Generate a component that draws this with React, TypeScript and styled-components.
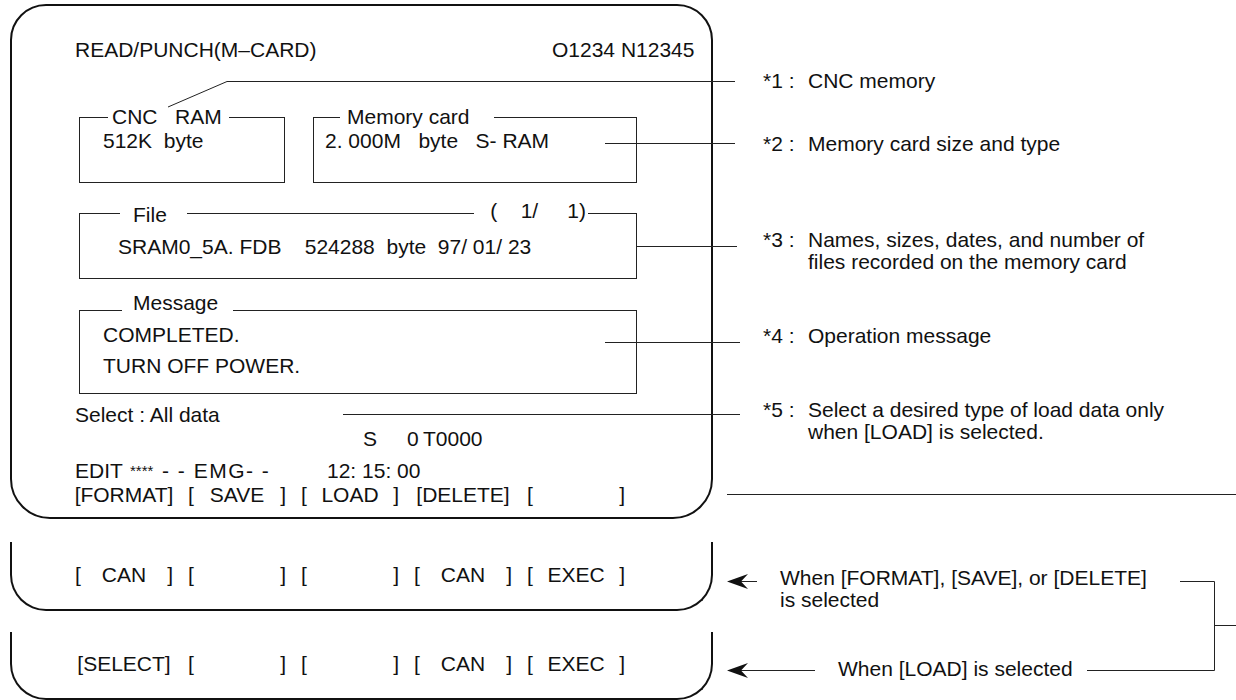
import React from "react";
import styled, { createGlobalStyle } from "styled-components";

const Global = createGlobalStyle`
  html, body { margin: 0; padding: 0; background: #fff; }
  body { font-family: "Liberation Sans", Arial, Helvetica, sans-serif; color: #111; }
`;

const Page = styled.div`
  position: relative;
  width: 1236px;
  height: 700px;
  overflow: hidden;
  display: grid;
  grid-template-columns: 713px 1fr;
  grid-template-rows: 519px 92px 89px;
  font-size: 21px;
  line-height: 20px;
  background: #fff;
`;

const Screen = styled.section`
  margin: 4px 0 0 10px;
  height: 515px;
  box-sizing: border-box;
  border: 2px solid #111;
  border-radius: 36px 36px 40px 40px;
  padding: 34px 0 0 63px;
  display: flex;
  flex-direction: column;
  align-items: flex-start;
`;

const Header = styled.div`
  display: grid;
  grid-template-columns: 477px auto;
  height: 20px;
  white-space: pre;
`;

const Line = styled.div<{ $mt?: number; $pl?: number }>`
  margin-top: ${(p) => p.$mt ?? 0}px;
  padding-left: ${(p) => p.$pl ?? 0}px;
  height: 20px;
  white-space: pre;
`;

const Cols = styled.div<{ $mt?: number; $pl?: number; $cols: string }>`
  display: grid;
  grid-template-columns: ${(p) => p.$cols};
  margin-top: ${(p) => p.$mt ?? 0}px;
  padding-left: ${(p) => p.$pl ?? 0}px;
  height: 20px;
  white-space: pre;
`;

const Stars = styled.span`
  font-size: 15px;
`;

const Spaced = styled.span`
  letter-spacing: 1.5px;
`;

const BoxRow = styled.div`
  display: flex;
  gap: 28px;
  margin: 57px 0 0 4px;
`;

const Box = styled.div<{
  $w: number;
  $h: number;
  $mt?: number;
  $ml?: number;
  $pt: number;
  $pl: number;
}>`
  position: relative;
  box-sizing: border-box;
  width: ${(p) => p.$w}px;
  height: ${(p) => p.$h}px;
  margin-top: ${(p) => p.$mt ?? 0}px;
  margin-left: ${(p) => p.$ml ?? 0}px;
  border: 1px solid #222;
  padding: ${(p) => p.$pt}px 0 0 ${(p) => p.$pl}px;
  white-space: pre;
`;

const Legend = styled.span<{
  $top: number;
  $left?: number;
  $right?: number;
  $padL: number;
  $padR: number;
}>`
  position: absolute;
  top: ${(p) => p.$top}px;
  ${(p) => (p.$left !== undefined ? `left: ${p.$left}px;` : "")}
  ${(p) => (p.$right !== undefined ? `right: ${p.$right}px;` : "")}
  padding: 0 ${(p) => p.$padR}px 0 ${(p) => p.$padL}px;
  background: #fff;
  line-height: 20px;
  white-space: pre;
`;

const BoxText = styled.div<{ $mt?: number }>`
  margin-top: ${(p) => p.$mt ?? 0}px;
  height: 20px;
`;

const SoftkeyBar = styled.div<{ $mt?: number }>`
  display: flex;
  gap: 15px;
  margin-top: ${(p) => p.$mt ?? 0}px;
  height: 20px;
`;

const Key = styled.span<{ $tight?: boolean }>`
  width: 98px;
  display: flex;
  justify-content: ${(p) => (p.$tight ? "center" : "space-between")};
  white-space: pre;
`;

const SoftFrame = styled.section<{ $mt: number; $h: number; $pt: number }>`
  margin: ${(p) => p.$mt}px 0 0 10px;
  height: ${(p) => p.$h}px;
  box-sizing: border-box;
  border: 2px solid #111;
  border-top: none;
  border-radius: 0 0 36px 36px;
  padding: ${(p) => p.$pt}px 0 0 63px;
`;

const Notes = styled.aside`
  display: flex;
  flex-direction: column;
  padding-left: 50px;
`;

const Note = styled.div<{ $mt: number }>`
  display: grid;
  grid-template-columns: 45px auto;
  margin-top: ${(p) => p.$mt}px;
  line-height: 22px;
  white-space: pre;
`;

const Caption = styled.div<{ $mt: number; $pl: number }>`
  margin-top: ${(p) => p.$mt}px;
  padding-left: ${(p) => p.$pl}px;
  line-height: 22px;
  white-space: pre;
`;

const Overlay = styled.svg`
  position: absolute;
  left: 0;
  top: 0;
  pointer-events: none;
`;

type KeyDef = { label: string; tight?: boolean };

const Softkeys: React.FC<{ keys: KeyDef[]; mt?: number }> = ({ keys, mt }) => (
  <SoftkeyBar $mt={mt}>
    {keys.map((k, i) =>
      k.tight ? (
        <Key key={i} $tight>
          {`[${k.label}]`}
        </Key>
      ) : (
        <Key key={i}>
          <span>[</span>
          <span>{k.label}</span>
          <span>]</span>
        </Key>
      )
    )}
  </SoftkeyBar>
);

const notes = [
  { mt: 70, tag: "*1 :", lines: ["CNC memory"] },
  { mt: 41, tag: "*2 :", lines: ["Memory card size and type"] },
  {
    mt: 74,
    tag: "*3 :",
    lines: ["Names, sizes, dates, and number of", "files recorded on the memory card"],
  },
  { mt: 52, tag: "*4 :", lines: ["Operation message"] },
  {
    mt: 52,
    tag: "*5 :",
    lines: ["Select a desired type of load data only", "when [LOAD] is selected."],
  },
];

export default function App() {
  return (
    <>
      <Global />
      <Page>
        <Screen>
          <Header>
            <span>READ/PUNCH(M–CARD)</span>
            <span>O1234 N12345</span>
          </Header>

          <BoxRow>
            <Box $w={206} $h={66} $pt={13} $pl={23}>
              <Legend $top={-11} $left={28} $padL={4} $padR={7}>
                CNC   RAM
              </Legend>
              512K  byte
            </Box>
            <Box $w={324} $h={66} $pt={13} $pl={11}>
              <Legend $top={-11} $left={26} $padL={7} $padR={24}>
                Memory card
              </Legend>
              2. 000M   byte   S- RAM
            </Box>
          </BoxRow>

          <Box $w={558} $h={66} $mt={30} $ml={4} $pt={23} $pl={38}>
            <Legend $top={-9} $left={40} $padL={13} $padR={20}>
              File
            </Legend>
            <Legend $top={-13} $right={48} $padL={16} $padR={2}>
              (    1/     1)
            </Legend>
            SRAM0_5A. FDB    524288  byte  97/ 01/ 23
          </Box>

          <Box $w={558} $h={84} $mt={31} $ml={4} $pt={14} $pl={23}>
            <Legend $top={-18} $left={42} $padL={11} $padR={15}>
              Message
            </Legend>
            <BoxText>COMPLETED.</BoxText>
            <BoxText $mt={11}>TURN OFF POWER.</BoxText>
          </Box>

          <Line $mt={11}>Select : All data</Line>
          <Cols $mt={4} $pl={288} $cols="44px 16px auto">
            <span>S</span>
            <span>0</span>
            <span>T0000</span>
          </Cols>
          <Cols $mt={12} $cols="55px 32px 165px auto">
            <span>EDIT</span>
            <Stars>****</Stars>
            <Spaced>- - EMG- -</Spaced>
            <span>12: 15: 00</span>
          </Cols>
          <Softkeys
            mt={4}
            keys={[
              { label: "FORMAT", tight: true },
              { label: "SAVE" },
              { label: "LOAD" },
              { label: "DELETE", tight: true },
              { label: "" },
            ]}
          />
        </Screen>

        <Notes>
          {notes.map((n) => (
            <Note key={n.tag} $mt={n.mt}>
              <span>{n.tag}</span>
              <span>{n.lines.join("\n")}</span>
            </Note>
          ))}
        </Notes>

        <SoftFrame $mt={23} $h={69} $pt={23}>
          <Softkeys
            keys={[
              { label: "CAN" },
              { label: "" },
              { label: "" },
              { label: "CAN" },
              { label: "EXEC" },
            ]}
          />
        </SoftFrame>
        <Caption $mt={48} $pl={67}>
          {"When [FORMAT], [SAVE], or [DELETE]\nis selected"}
        </Caption>

        <SoftFrame $mt={21} $h={68} $pt={22}>
          <Softkeys
            keys={[
              { label: "SELECT", tight: true },
              { label: "" },
              { label: "" },
              { label: "CAN" },
              { label: "EXEC" },
            ]}
          />
        </SoftFrame>
        <Caption $mt={47} $pl={125}>
          When [LOAD] is selected
        </Caption>

        <Overlay width={1236} height={700} viewBox="0 0 1236 700">
          <g stroke="#222" strokeWidth={1} fill="none">
            <polyline points="168,107 227,81.5 735,81.5" />
            <line x1={605} y1={143.5} x2={735} y2={143.5} />
            <line x1={636} y1={246.5} x2={737} y2={246.5} />
            <line x1={605} y1={342.5} x2={740} y2={342.5} />
            <line x1={343} y1={414.5} x2={740} y2={414.5} />
            <line x1={727} y1={494.5} x2={1236} y2={494.5} />
            <line x1={738} y1={581.5} x2={757} y2={581.5} />
            <line x1={738} y1={670.5} x2={815} y2={670.5} />
            <polyline points="1180,581.5 1214.5,581.5 1214.5,670.5 1087,670.5" />
            <line x1={1214.5} y1={625.5} x2={1236} y2={625.5} />
          </g>
          <g fill="#111">
            <path d="M727 581.5 L748 574 L741 581.5 L748 589 Z" />
            <path d="M727 670.5 L748 663 L741 670.5 L748 678 Z" />
          </g>
        </Overlay>
      </Page>
    </>
  );
}
